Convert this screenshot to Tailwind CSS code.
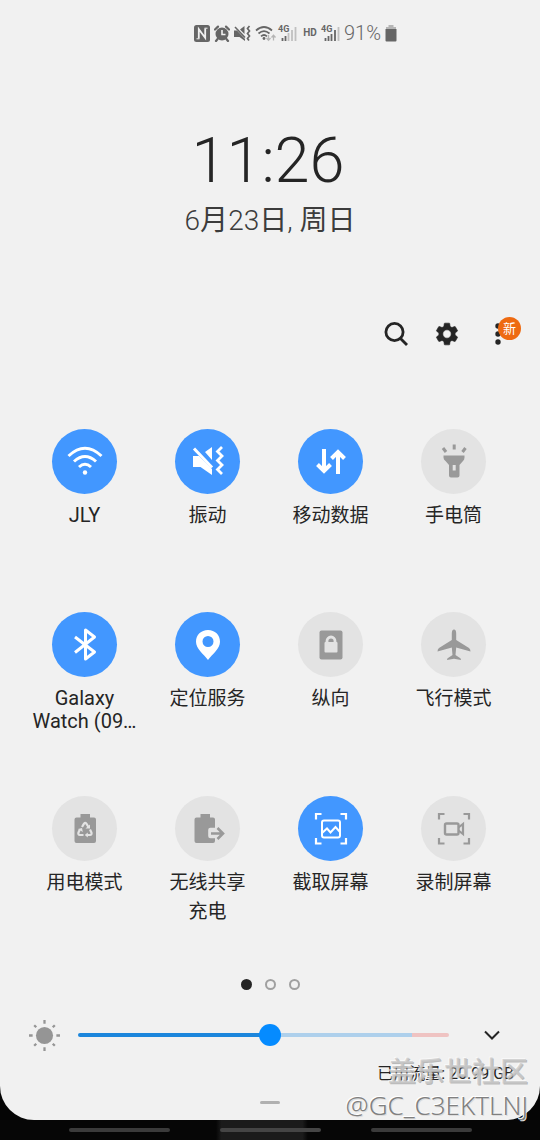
<!DOCTYPE html>
<html lang="zh-CN">
<head>
<meta charset="utf-8">
<meta name="viewport" content="width=device-width, initial-scale=1">
<title>快捷设置</title>
<script src="https://cdn.jsdelivr.net/npm/@tailwindcss/browser@4"></script>
</head>
<body class="flex min-h-screen flex-col bg-[#050505] font-['Roboto','Noto_Sans_CJK_SC',sans-serif] text-[#252525]">

<main class="relative flex flex-col rounded-b-[34px] bg-[#f1f1f1] pb-4 pt-5">

  <!-- Status bar -->
  <header class="flex h-[26px] items-center justify-center pl-[51px] text-[#666]">
    <div class="flex items-center gap-1">
      <svg class="h-[17px] w-4" viewBox="0 0 16 17" aria-label="NFC"><rect width="16" height="17" rx="2.500" fill="currentColor"/><path d="M4.800 13.500V4.200L11.200 12.800V3.500" fill="none" stroke="#f1f1f1" stroke-width="1.800"/><path d="M2.500 13.800h3M10.500 3.200h3" stroke="#f1f1f1" stroke-width="1"/></svg>
      <svg class="h-[17px] w-4" viewBox="0 0 16 17" aria-label="闹钟"><circle cx="8" cy="9" r="6.500" fill="currentColor"/><path d="M1 4.500 4 1.600M15 4.500 12 1.600M3.600 14l-1.600 2M12.400 14l1.600 2" stroke="currentColor" stroke-width="2.200" stroke-linecap="round"/><path d="M8 5v4.500h3.500" fill="none" stroke="#f1f1f1" stroke-width="1.600"/></svg>
      <svg class="h-[17px] w-[17px]" viewBox="0 0 17 17" aria-label="振动"><path d="M0 5.500h3L11 14v2L5.500 12H0ZM6 4.500 10.500 1v8Z" fill="currentColor"/><path d="m1 2 10 10.500" stroke="currentColor" stroke-width="1.600"/><path d="m15.500 1-2 2.500 2 2.500-2 2.500 2 2.500-2 2.500 1.500 2" fill="none" stroke="currentColor" stroke-width="1.700"/></svg>
      <svg class="h-[17px] w-[21px]" viewBox="0 0 21 17" aria-label="无线网络"><path d="M1 5.500Q9 -1.500 17 5.500M3.500 8.500Q9 3.700 14.500 8.500M6 11.300Q9 8.700 12 11.300" fill="none" stroke="currentColor" stroke-width="1.700"/><circle cx="9" cy="13.500" r="1.400" fill="currentColor"/><path d="M13.500 10v5M11.500 13l2 2.300 2-2.300M18.500 15.500v-5M16.500 12.500l2-2.300 2 2.300" fill="none" stroke="#b5b5b5" stroke-width="1.300"/></svg>
      <svg class="-ml-0.5 h-[17px] w-[19px] overflow-visible" viewBox="0 0 19 17" role="img" aria-label="4G 信号"><path d="M4.500 13v3M7.500 11v5" stroke="currentColor" stroke-width="1.800"/><path d="M10.500 8v8M14 5v11M17.500 2v14" stroke="#c0c0c0" stroke-width="1.800"/><text x="0" y="7" font-size="9" font-weight="700" fill="currentColor">4G</text></svg>
      <span class="w-[18px] text-center text-[10px] font-bold leading-4">HD</span>
      <svg class="-ml-0.5 h-[17px] w-[19px] overflow-visible" viewBox="0 0 19 17" role="img" aria-label="4G 信号"><path d="M4.500 13v3M7.500 11v5M10.500 9v7M14 5v11" stroke="currentColor" stroke-width="1.800"/><path d="M17.500 2v14" stroke="#c0c0c0" stroke-width="1.800"/><text x="0" y="7" font-size="9" font-weight="700" fill="currentColor">4G</text></svg>
      <span class="text-[20px] font-light leading-6">91%</span>
      <svg class="h-[17px] w-3" viewBox="0 0 12 17" aria-label="电池"><path d="M3.500 0h5v2h2.500v2H1V2h2.500Z" fill="#b5b5b5"/><path d="M.500 4h11v11.500q0 1-1 1h-9q-1 0-1-1Z" fill="currentColor"/></svg>
    </div>
  </header>

  <!-- Clock -->
  <section class="mt-[79px] text-center">
    <h1 class="pr-1 text-[63px] font-light leading-[72px]">11:26</h1>
    <p class="mt-[6px] text-[28px] font-light leading-9 text-[#3c3c3c]">6<span class="font-normal">月</span>23<span class="font-normal">日</span>, <span class="font-normal">周日</span></p>
  </section>

  <!-- Panel actions -->
  <div class="mt-[79px] flex h-8 items-center justify-end gap-[19px] pr-[26px]">
    <button type="button" aria-label="搜索" class="grid size-8 place-items-center"><svg class="size-6" viewBox="0 0 24 24" fill="none" stroke="currentColor" stroke-width="2.800"><circle cx="10.500" cy="10" r="8.600"/><path d="m16.500 16.500 6.500 6.500"/></svg></button>
    <button type="button" aria-label="设置" class="grid size-8 place-items-center"><svg class="size-[26px]" viewBox="0 0 24 24" fill="currentColor" stroke="currentColor" stroke-width=".6" stroke-linejoin="round"><path d="M19.430 12.980c.04-.32.07-.64.07-.98s-.03-.66-.07-.98l2.110-1.650c.19-.15.24-.42.12-.64l-2-3.460c-.12-.22-.39-.3-.61-.22l-2.490 1c-.52-.4-1.080-.73-1.690-.98l-.38-2.650C14.460 2.180 14.250 2 14 2h-4c-.25 0-.46.18-.49.42l-.38 2.650c-.61.25-1.170.59-1.690.98l-2.490-1c-.23-.09-.49 0-.61.22l-2 3.460c-.13.22-.07.49.12.64l2.110 1.650c-.04.32-.07.65-.07.98s.03.66.07.98l-2.110 1.650c-.19.15-.24.42-.12.64l2 3.460c.12.22.39.3.61.22l2.490-1c.52.4 1.080.73 1.690.98l.38 2.650c.03.24.24.42.49.42h4c.25 0 .46-.18.49-.42l.38-2.650c.61-.25 1.170-.59 1.690-.98l2.490 1c.23.09.49 0 .61-.22l2-3.460c.12-.22.07-.49-.12-.64l-2.110-1.650zM12 15.900a3.900 3.900 0 1 1 0-7.800 3.900 3.900 0 0 1 0 7.800z"/></svg></button>
    <button type="button" aria-label="更多选项" class="relative grid size-8 place-items-center"><svg class="h-6 w-2" viewBox="0 0 8 24" fill="currentColor"><circle cx="4" cy="4" r="2.700"/><circle cx="4" cy="12" r="2.700"/><circle cx="4" cy="20" r="2.700"/></svg><span class="absolute -top-[1px] left-4 grid size-[23px] place-items-center rounded-full bg-[#ee6a11] text-[13px] leading-none text-white">新</span></button>
  </div>

  <!-- Quick setting tiles -->
  <section aria-label="快捷开关" class="mt-[79px] grid grid-cols-4 grid-rows-[183px_184px_182px] pl-[23px] pr-[25px] text-[19px]">
    <button type="button" aria-pressed="true" class="flex flex-col items-center">
      <span class="grid size-[65px] place-items-center rounded-full bg-[#4297ff] text-white"><svg class="size-10" viewBox="0 0 40 40" fill="none" stroke="currentColor" stroke-width="3"><path d="M3.500 14Q20 -1.500 36.500 14M9 19.500Q20 9.500 31 19.500M14 25Q20 19.500 26 25"/><circle cx="20" cy="30.500" r="2.200" fill="currentColor" stroke="none"/></svg></span>
      <span class="mt-[7px] text-[20px] leading-[29px]">JLY</span>
    </button>
    <button type="button" aria-pressed="true" class="flex flex-col items-center">
      <span class="grid size-[65px] place-items-center rounded-full bg-[#4297ff] text-white"><svg class="size-10" viewBox="0 0 40 40"><path d="M5 14h6L24 27v6L12.500 25H5ZM17 10l7-5v13Z" fill="currentColor"/><path d="M6 6.500 24 25.500" stroke="currentColor" stroke-width="3"/><path d="m34 5-4.500 4.500 4.500 4.500-4.500 4.500 4.500 4.500-4.500 4.500 4.500 4.500" fill="none" stroke="currentColor" stroke-width="2.800"/></svg></span>
      <span class="mt-[7px] leading-[29px]">振动</span>
    </button>
    <button type="button" aria-pressed="true" class="flex flex-col items-center">
      <span class="grid size-[65px] place-items-center rounded-full bg-[#4297ff] text-white"><svg class="size-10" viewBox="0 0 40 40" fill="none" stroke="currentColor" stroke-width="4"><path d="M13 7v22M6.500 22.500l6.500 6.500 6.500-6.500M27 32V10M20.500 16.500l6.500-6.500 6.500 6.500"/></svg></span>
      <span class="mt-[7px] leading-[29px]">移动数据</span>
    </button>
    <button type="button" aria-pressed="false" class="flex flex-col items-center">
      <span class="grid size-[65px] place-items-center rounded-full bg-[#e3e3e3] text-[#999]"><svg class="size-10" viewBox="0 0 40 40"><path fill-rule="evenodd" d="M9.500 13.500h21v2q0 2-1.500 3.500l-3.500 4V33.500q0 2-2 2h-6.500q-2 0-2-2V23l-3.500-4q-2-1.500-2-3.500ZM18.700 23v5.500h3v-5.500Z" fill="currentColor"/><path d="M20.200 2.500v5M9 6l3 4M31.500 6l-3 4" stroke="currentColor" stroke-width="3"/></svg></span>
      <span class="mt-[7px] leading-[29px]">手电筒</span>
    </button>

    <button type="button" aria-pressed="true" class="flex flex-col items-center">
      <span class="grid size-[65px] place-items-center rounded-full bg-[#4297ff] text-white"><svg class="size-10" viewBox="0 0 40 40" fill="none" stroke="currentColor" stroke-width="3" stroke-linejoin="round"><path d="M10 12 29.500 27 20.500 34V5L29.500 12 10 27.500"/></svg></span>
      <span class="mt-[10px] text-[20px] leading-[23px]">Galaxy<br>Watch (09…</span>
    </button>
    <button type="button" aria-pressed="true" class="flex flex-col items-center">
      <span class="grid size-[65px] place-items-center rounded-full bg-[#4297ff] text-white"><svg class="size-10" viewBox="0 0 40 40"><path fill-rule="evenodd" d="M20 5C13 5 8 10 8 16.800 8 24 15.500 29 20 35 24.500 29 32 24 32 16.800 32 10 27 5 20 5Zm0 6a5.500 5.500 0 1 1 0 11 5.500 5.500 0 0 1 0-11Z" fill="currentColor"/></svg></span>
      <span class="mt-[7px] leading-[29px]">定位服务</span>
    </button>
    <button type="button" aria-pressed="false" class="flex flex-col items-center">
      <span class="grid size-[65px] place-items-center rounded-full bg-[#e3e3e3] text-[#999]"><svg class="size-10" viewBox="0 0 40 40"><rect x="8.500" y="5.500" width="23" height="29" rx="2" fill="currentColor"/><rect x="13.500" y="17" width="13" height="10.500" rx="1" fill="#e3e3e3"/><path d="M16 18v-2a4 4 0 0 1 8 0v2" fill="none" stroke="#e3e3e3" stroke-width="2.800"/></svg></span>
      <span class="mt-[7px] leading-[29px]">纵向</span>
    </button>
    <button type="button" aria-pressed="false" class="flex flex-col items-center">
      <span class="grid size-[65px] place-items-center rounded-full bg-[#e3e3e3] text-[#999]"><svg class="size-10" viewBox="0 0 40 40" fill="currentColor"><path d="M20 4.500q2.200 0 2.200 4v6.500L35 23q1.500 1 1.500 3.500l-14.300-4-.700 7.500 4.500 3q1 .700 1 2L20 33.800 13 35q0-1.300 1-2l4.500-3-.700-7.500-14.300 4Q3.500 24 5 23l12.800-8V8.500q0-4 2.200-4Z"/></svg></span>
      <span class="mt-[7px] leading-[29px]">飞行模式</span>
    </button>

    <button type="button" aria-pressed="false" class="flex flex-col items-center">
      <span class="grid size-[65px] place-items-center rounded-full bg-[#e3e3e3] text-[#999]"><svg class="size-10" viewBox="0 0 40 40"><path d="M15.500 5h9.500v3.500h4q2 0 2 2V32q0 2-2 2H11.500q-2 0-2-2V10.500q0-2 2-2h4Z" fill="currentColor"/><path d="m17 18 2-3.300q1.200-1.500 2.400 0l2 3.300M25 20.500l1.500 3.200q.500 2-1.600 2.300H22M18.500 26h-3.500q-2.100-.300-1.600-2.300l1.500-3.200" fill="none" stroke="#e3e3e3" stroke-width="2.200"/><path d="M25 15.500v4h-4.500ZM22.800 23.500v5l-3-2.500ZM13 20l4-1 .800 4Z" fill="#e3e3e3"/></svg></span>
      <span class="mt-[7px] leading-[29px]">用电模式</span>
    </button>
    <button type="button" aria-pressed="false" class="flex flex-col items-center">
      <span class="grid size-[65px] place-items-center rounded-full bg-[#e3e3e3] text-[#999]"><svg class="size-10" viewBox="0 0 40 40"><path d="M12.500 5h9.500v3.500h3q2 0 2 2V32q0 2-2 2H8.500q-2 0-2-2V10.500q0-2 2-2h4Z" fill="currentColor"/><path d="M30 18.700h-7.500q-2.300 0-2.300 2V27q0 2.200 2.300 2.200H30Z" fill="#e3e3e3"/><path d="M23 24.500h12M29.500 19l5.500 5.500-5.500 5.500" fill="none" stroke="currentColor" stroke-width="2.600"/></svg></span>
      <span class="mt-[7px] leading-[29px]">无线共享<br>充电</span>
    </button>
    <button type="button" aria-pressed="true" class="flex flex-col items-center">
      <span class="grid size-[65px] place-items-center rounded-full bg-[#4297ff] text-white"><svg class="size-10" viewBox="0 0 40 40" fill="none" stroke="currentColor" stroke-width="2.200"><path d="M5 10.500V5h5.500M29.500 5H35v5.500M35 29v5.500h-5.500M10.500 34.500H5V29"/><rect x="11" y="11.500" width="18" height="17" rx="2" stroke-width="2"/><path d="m11 24 5-4.500 3.500 4 5-5.500 4.500 5" stroke-width="2"/></svg></span>
      <span class="mt-[7px] leading-[29px]">截取屏幕</span>
    </button>
    <button type="button" aria-pressed="false" class="flex flex-col items-center">
      <span class="grid size-[65px] place-items-center rounded-full bg-[#e3e3e3] text-[#999]"><svg class="size-10" viewBox="0 0 40 40" fill="none" stroke="currentColor" stroke-width="2.200"><path d="M5 10.500V5h5.500M29.500 5H35v5.500M35 29v5.500h-5.500M10.500 34.500H5V29"/><rect x="11" y="14.500" width="13.500" height="11" rx="1.500" stroke-width="2.400"/><path d="m24.500 18.500 4.500-3.500v10l-4.500-3.500" stroke-width="2.200"/></svg></span>
      <span class="mt-[7px] leading-[29px]">录制屏幕</span>
    </button>
  </section>

  <!-- Page dots -->
  <nav aria-label="页面" class="flex h-3 items-center justify-center gap-[13px]">
    <button type="button" aria-label="第1页" aria-current="page" class="size-[11px] rounded-full bg-[#252525]"></button>
    <button type="button" aria-label="第2页" class="size-[11px] rounded-full border-2 border-[#a0a0a0]"></button>
    <button type="button" aria-label="第3页" class="size-[11px] rounded-full border-2 border-[#a0a0a0]"></button>
  </nav>

  <!-- Brightness -->
  <div class="mt-[25px] flex h-10 items-center pl-7 pr-8">
    <label for="brightness" aria-label="亮度" class="mr-[17px] shrink-0 text-[#959595]"><svg class="size-[33px]" viewBox="0 0 32 32"><circle cx="16" cy="16" r="8.300" fill="currentColor"/><path d="M16 1v3.500M16 27.500V31M1 16h3.500M27.500 16H31M6 6l2 2M24 24l2 2M6 26l2-2M24 8l2-2" stroke="currentColor" stroke-width="2.200"/></svg></label>
    <input id="brightness" type="range" min="0" max="100" value="52" class="h-6 min-w-0 flex-1 appearance-none bg-transparent [&::-webkit-slider-runnable-track]:h-1 [&::-webkit-slider-runnable-track]:rounded-full [&::-webkit-slider-runnable-track]:bg-[linear-gradient(to_right,#1c86dc_52%,#aed0ec_52%,#aed0ec_90%,#efc3c2_90%)] [&::-webkit-slider-thumb]:-mt-[9px] [&::-webkit-slider-thumb]:size-[22px] [&::-webkit-slider-thumb]:appearance-none [&::-webkit-slider-thumb]:rounded-full [&::-webkit-slider-thumb]:bg-[#058bff]">
    <button type="button" aria-label="展开" class="ml-[27px] grid size-8 shrink-0 place-items-center"><svg class="h-[10px] w-4" viewBox="0 0 16 10" fill="none" stroke="currentColor" stroke-width="2"><path d="m1 1.500 7 7 7-7"/></svg></button>
  </div>

  <p class="mt-[7px] pr-[26px] text-right text-[16px] leading-6">已用流量: 20.99 GB</p>
  <div class="mx-auto mt-[15px] h-[3px] w-5 rounded-full bg-[#b0b0b0]"></div>

  <!-- Author mark laid over the panel -->
  <div class="pointer-events-none absolute -bottom-px right-3 text-right">
    <p class="font-['Noto_Sans_CJK_SC',sans-serif] text-[28px] font-medium leading-[38px] text-[#c9c9c9]/80 [text-shadow:1px_1px_0_#8888,-1px_-1px_0_#fff8]">盖乐世社区</p>
    <p class="font-['Noto_Sans',sans-serif] text-[26px] font-light leading-8 text-[#808080] [text-shadow:-1px_-1px_0_#fff,1px_1px_0_#ddd]">@GC_C3EKTLNJ</p>
  </div>
</main>

<!-- Navigation gesture hints -->
<footer class="flex flex-1 items-center justify-center gap-[50px] bg-[linear-gradient(to_right,#060606_40%,#1b1b1b_41%,#1b1b1b_56%,#060606_57%)]">
  <span class="h-1 w-[101px] rounded-full bg-[#3b3b3b]"></span>
  <span class="h-1 w-[101px] rounded-full bg-[#454545]"></span>
  <span class="h-1 w-[101px] rounded-full bg-[#3b3b3b]"></span>
</footer>
</body>
</html>
